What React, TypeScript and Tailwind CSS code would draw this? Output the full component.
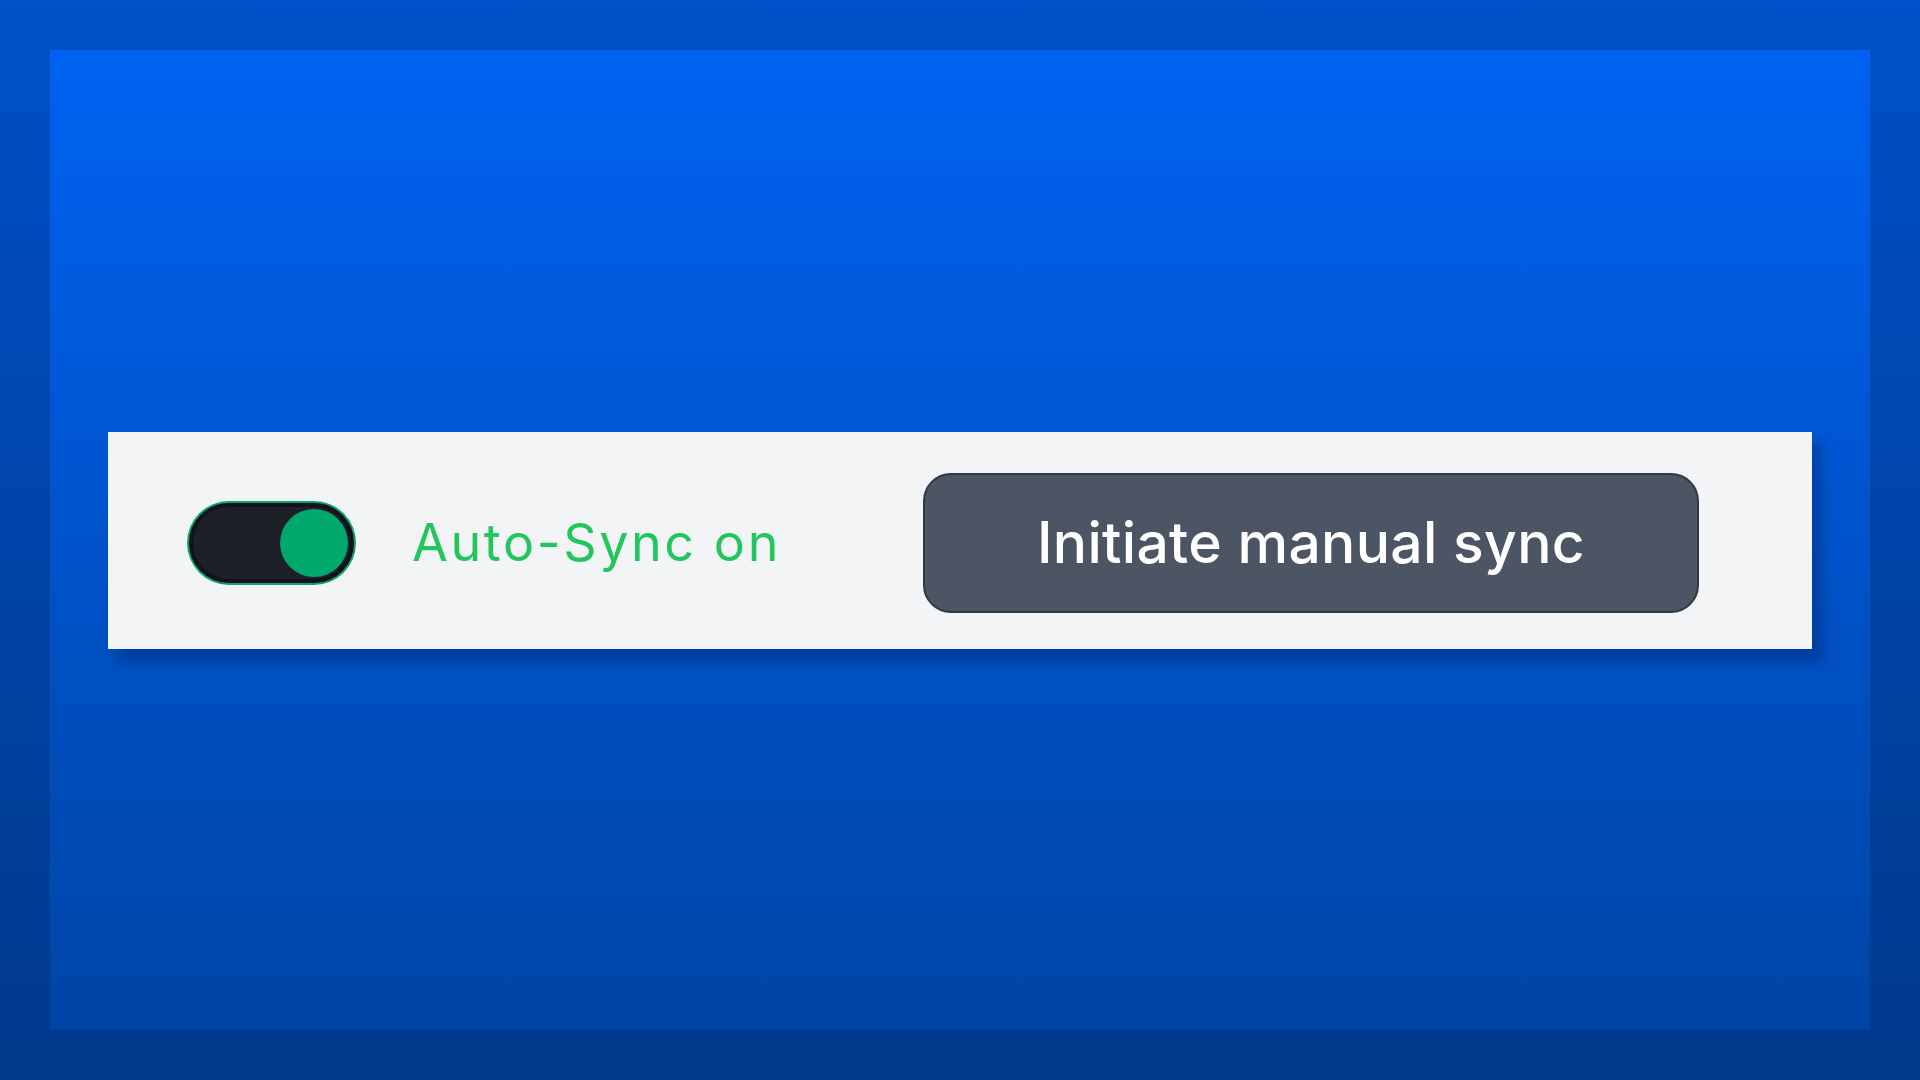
export default function App() {
  return (
    <div className="w-[1920px] h-[1080px] p-[50px] bg-gradient-to-b from-[#0050c9] to-[#00398b]">
      <div className="h-full w-full flex items-center justify-center bg-gradient-to-b from-[#0062f1] to-[#0045a6]">
        <div className="w-[1704px] h-[217px] bg-[#f3f4f6] flex items-center pl-[81px] pt-[5px] shadow-[10px_12px_12px_rgba(0,20,70,0.3)]">
          {/* switch */}
          <button
            aria-label="Auto-Sync"
            className="relative w-[165px] h-[80px] rounded-full bg-[#1d2027] border-[4px] border-[#150f1f] shadow-[0_0_0_2px_#0aa560] shrink-0"
          >
            <span className="absolute right-[2px] top-1/2 -translate-y-1/2 w-[68px] h-[68px] rounded-full bg-[#00a86b]" />
          </button>
          <span
            className="ml-[58px] w-[511px] shrink-0 whitespace-nowrap text-[52px] leading-none text-[#22c55e] tracking-[2.6px]"
            style={{ fontFamily: "Inter, 'Noto Sans', sans-serif" }}
          >
            Auto-Sync on
          </span>
          <button
            className="w-[776px] h-[140px] shrink-0 rounded-[28px] bg-[#4b5563] border-2 border-[#2e3848] flex items-center justify-center text-white text-[57px] font-medium leading-none tracking-[0.3px]"
            style={{ fontFamily: "Inter, 'Noto Sans', sans-serif" }}
          >
            Initiate manual sync
          </button>
        </div>
      </div>
    </div>
  );
}
